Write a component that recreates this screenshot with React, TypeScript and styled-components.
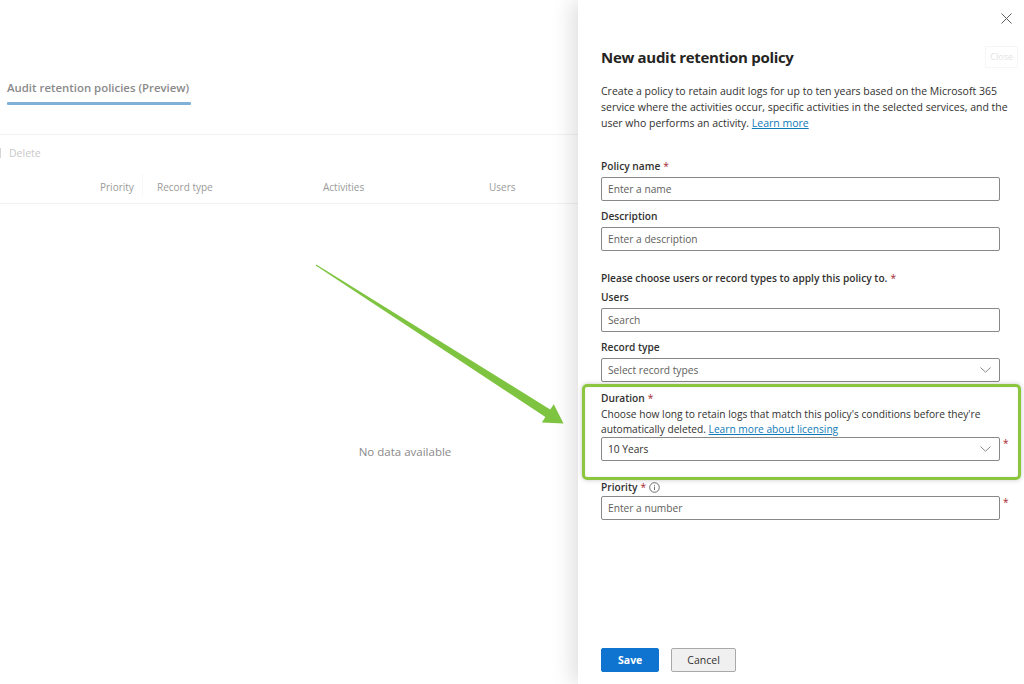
import React from 'react';
import styled, { createGlobalStyle } from 'styled-components';

const GlobalStyle = createGlobalStyle`
  html, body {
    margin: 0;
    padding: 0;
    background: #fff;
  }
  body {
    font-family: 'Open Sans', 'Liberation Sans', sans-serif;
    color: #323130;
  }
  * { box-sizing: border-box; }
`;

const Screen = styled.div`
  position: relative;
  display: flex;
  width: 1024px;
  height: 684px;
  overflow: hidden;
  background: #fff;
`;

/* faded page behind the panel */
const Backdrop = styled.div`
  flex: 1;
  min-width: 0;
  overflow: hidden;
  display: flex;
  flex-direction: column;
  padding-top: 78px;
`;

const Tab = styled.div`
  align-self: flex-start;
  margin-left: 7px;
  display: flex;
  flex-direction: column;
`;

const TabLabel = styled.span`
  font-size: 11.4px;
  line-height: 20px;
  font-weight: 600;
  color: #8a8a8a;
`;

const TabUnderline = styled.div`
  height: 3px;
  margin-top: 4px;
  margin-right: -2px;
  border-radius: 1px;
  background: #7fb0d8;
`;

const Toolbar = styled.div`
  margin-top: 29px;
  height: 36px;
  border-top: 1px solid #f1f1f1;
  display: flex;
  align-items: center;
  gap: 8px;
`;

const ToolbarStub = styled.span`
  width: 1px;
  height: 10px;
  background: #d6d6d6;
`;

const ToolbarAction = styled.span`
  font-size: 10.5px;
  color: #c9c9c9;
`;

const HeaderRow = styled.div`
  height: 34px;
  border-bottom: 1px solid #f1f1f1;
  display: grid;
  grid-template-columns: 57px 166px 166px 1fr;
  padding-left: 100px;
  align-items: center;
`;

const HeaderCell = styled.span<{ $divider?: boolean }>`
  position: relative;
  font-size: 10px;
  color: #9a9a9a;
  &::after {
    content: '';
    display: ${({ $divider }) => ($divider ? 'block' : 'none')};
    position: absolute;
    right: 14px;
    top: -6px;
    height: 22px;
    width: 1px;
    background: #f7f7f7;
  }
`;

const EmptyState = styled.div`
  width: 810px;
  margin-top: 240px;
  text-align: center;
  font-size: 11.5px;
  line-height: 16px;
  color: #8a8a8a;
`;

/* side panel */
const Panel = styled.aside`
  position: relative;
  z-index: 1;
  width: 446px;
  flex-shrink: 0;
  display: flex;
  flex-direction: column;
  padding-left: 23px;
  background: #fff;
  box-shadow: -6px 0 20px rgba(0, 0, 0, 0.13);
`;

const CloseRow = styled.div`
  height: 36px;
  display: flex;
  justify-content: flex-end;
  align-items: center;
  padding-right: 12px;
`;

const IconButton = styled.button`
  width: 12px;
  height: 12px;
  padding: 0;
  border: none;
  background: none;
  display: flex;
  align-items: center;
  justify-content: center;
  color: #605e5c;
`;

const TitleRow = styled.div`
  margin-top: 10px;
  margin-right: 6px;
  display: flex;
  justify-content: space-between;
  align-items: center;
`;

const Title = styled.h1`
  margin: 0;
  font-size: 15px;
  line-height: 22px;
  font-weight: 700;
  letter-spacing: -0.3px;
  color: #252423;
`;

const GhostButton = styled.span`
  padding: 3px 4px;
  border: 1px solid #f6f6f6;
  font-size: 9px;
  line-height: 14px;
  color: #e4e4e4;
`;

const Intro = styled.p`
  margin: 15px 0 27px;
  width: 408px;
  font-size: 10.5px;
  line-height: 16px;
  color: #323130;
`;

const LinkText = styled.a`
  color: #0f7ab8;
  text-decoration: underline;
`;

const Field = styled.div<{ $gap?: number }>`
  position: relative;
  display: flex;
  flex-direction: column;
  margin-top: ${({ $gap }) => $gap ?? 0}px;
`;

const Label = styled.label<{ $tight?: boolean }>`
  display: flex;
  align-items: center;
  gap: 3px;
  height: 16px;
  font-size: 10.2px;
  line-height: 16px;
  font-weight: 600;
  color: #323130;
  margin-bottom: ${({ $tight }) => ($tight ? 1 : 3)}px;
`;

const Required = styled.span`
  color: #a4262c;
  font-weight: 400;
`;

const HelpText = styled.div`
  width: 399px;
  font-size: 10.2px;
  line-height: 15px;
  color: #323130;
`;

const InputRow = styled.div`
  display: flex;
  align-items: flex-start;
  gap: 3px;
`;

const Box = styled.div`
  width: 399px;
  height: 24px;
  border: 1px solid #8a8886;
  border-radius: 2px;
  display: flex;
  align-items: center;
  justify-content: space-between;
  padding: 0 8px 0 6px;
  font-size: 10.2px;
  background: #fff;
`;

const Placeholder = styled.span<{ $filled?: boolean }>`
  color: ${({ $filled }) => ($filled ? '#323130' : '#605e5c')};
`;

const SideMark = styled.span`
  font-size: 10px;
  line-height: 10px;
  color: #a4262c;
  padding-top: 1px;
`;

/* annotation frame drawn over the duration block */
const Highlight = styled.div`
  position: absolute;
  top: -6px;
  left: -19px;
  width: 439px;
  bottom: -19px;
  border: 3px solid #8cc63f;
  border-radius: 5px;
  box-shadow: 0 0 5px rgba(0, 0, 0, 0.22), inset 0 0 3px rgba(0, 0, 0, 0.08);
  pointer-events: none;
`;

const Footer = styled.div`
  margin-top: auto;
  padding-bottom: 12px;
  display: flex;
  gap: 12px;
`;

const Button = styled.button<{ $primary?: boolean }>`
  height: 24px;
  padding: 0 ${({ $primary }) => ($primary ? 16 : 15)}px;
  border-radius: 2px;
  font-family: inherit;
  font-size: 10.5px;
  font-weight: ${({ $primary }) => ($primary ? 700 : 400)};
  color: ${({ $primary }) => ($primary ? '#fff' : '#323130')};
  background: ${({ $primary }) => ($primary ? '#0f74d0' : '#f0f0f0')};
  border: 1px solid ${({ $primary }) => ($primary ? '#0f74d0' : '#a8a8a8')};
`;

const ArrowLayer = styled.svg`
  position: absolute;
  left: 0;
  top: 0;
  z-index: 2;
  pointer-events: none;
`;

const Chevron = () => (
  <svg width="11" height="6" viewBox="0 0 11 6" fill="none">
    <path d="M0.5 0.5 L5.5 5.2 L10.5 0.5" stroke="#8a8886" strokeWidth="1" />
  </svg>
);

const InfoIcon = () => (
  <svg width="11" height="11" viewBox="0 0 11 11" fill="none">
    <circle cx="5.5" cy="5.5" r="4.8" stroke="#605e5c" strokeWidth="0.9" />
    <line x1="5.5" y1="4.6" x2="5.5" y2="8" stroke="#605e5c" strokeWidth="0.9" />
    <circle cx="5.5" cy="3.2" r="0.55" fill="#605e5c" />
  </svg>
);

const columns = [
  { name: 'Priority', divider: true },
  { name: 'Record type' },
  { name: 'Activities' },
  { name: 'Users' },
];

const App: React.FC = () => {
  return (
    <Screen>
      <GlobalStyle />
      <Backdrop>
        <Tab>
          <TabLabel>Audit retention policies (Preview)</TabLabel>
          <TabUnderline />
        </Tab>
        <Toolbar>
          <ToolbarStub />
          <ToolbarAction>Delete</ToolbarAction>
        </Toolbar>
        <HeaderRow>
          {columns.map(c => (
            <HeaderCell key={c.name} $divider={c.divider}>{c.name}</HeaderCell>
          ))}
        </HeaderRow>
        <EmptyState>No data available</EmptyState>
      </Backdrop>

      <Panel>
        <CloseRow>
          <IconButton aria-label="Close">
            <svg width="11" height="11" viewBox="0 0 11 11">
              <path d="M0.5 0.5 L10.5 10.5 M10.5 0.5 L0.5 10.5" stroke="#605e5c" strokeWidth="1" />
            </svg>
          </IconButton>
        </CloseRow>
        <TitleRow>
          <Title>New audit retention policy</Title>
          <GhostButton>Close</GhostButton>
        </TitleRow>
        <Intro>
          Create a policy to retain audit logs for up to ten years based on the Microsoft 365
          service where the activities occur, specific activities in the selected services, and the
          user who performs an activity. <LinkText>Learn more</LinkText>
        </Intro>

        <Field>
          <Label>Policy name <Required>*</Required></Label>
          <Box><Placeholder>Enter a name</Placeholder></Box>
        </Field>
        <Field $gap={7}>
          <Label>Description</Label>
          <Box><Placeholder>Enter a description</Placeholder></Box>
        </Field>

        <Field $gap={19}>
          <Label>Please choose users or record types to apply this policy to. <Required>*</Required></Label>
        </Field>
        <Field>
          <Label>Users</Label>
          <Box><Placeholder>Search</Placeholder></Box>
        </Field>
        <Field $gap={7}>
          <Label>Record type</Label>
          <Box><Placeholder>Select record types</Placeholder><Chevron /></Box>
        </Field>

        <Field $gap={8}>
          <Highlight />
          <Label $tight>Duration <Required>*</Required></Label>
          <HelpText>
            Choose how long to retain logs that match this policy's conditions before they're
            automatically deleted. <LinkText>Learn more about licensing</LinkText>
          </HelpText>
          <InputRow>
            <Box><Placeholder $filled>10 Years</Placeholder><Chevron /></Box>
            <SideMark>*</SideMark>
          </InputRow>
        </Field>

        <Field $gap={18}>
          <Label $tight>Priority <Required>*</Required> <InfoIcon /></Label>
          <InputRow>
            <Box><Placeholder>Enter a number</Placeholder></Box>
            <SideMark>*</SideMark>
          </InputRow>
        </Field>

        <Footer>
          <Button $primary>Save</Button>
          <Button>Cancel</Button>
        </Footer>
      </Panel>

      <ArrowLayer width="1024" height="684" viewBox="0 0 1024 684">
        <defs>
          <filter id="soft" x="-10%" y="-10%" width="120%" height="120%">
            <feGaussianBlur stdDeviation="0.6" />
          </filter>
        </defs>
        <polygon
          filter="url(#soft)"
          fill="#7fc441"
          points="315.7,265.4 545.4,417.0 541.8,422.4 563.5,423.5 553.8,404.2 550.2,409.4 316.3,264.6"
        />
      </ArrowLayer>
    </Screen>
  );
};

export default App;
